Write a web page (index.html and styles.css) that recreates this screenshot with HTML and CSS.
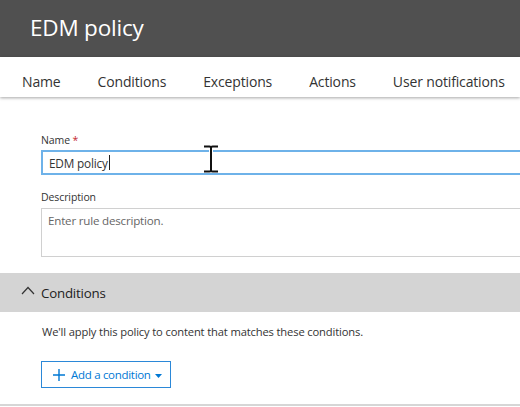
FILE: index.html
```html
<!DOCTYPE html>
<html>
<head>
<meta charset="utf-8">
<link rel="stylesheet" href="styles.css">
</head>
<body>
<div class="page">
  <header class="header"><h1 class="title">EDM policy</h1></header>
  <nav class="tabs">
    <span class="tab">Name</span>
    <span class="tab">Conditions</span>
    <span class="tab">Exceptions</span>
    <span class="tab">Actions</span>
    <span class="tab">User notifications</span>
  </nav>
  <section class="form">
    <label class="label">Name <span class="req">*</span></label>
    <div class="input"><span class="value">EDM policy</span><span class="caret"></span></div>
    <label class="label desc-label">Description</label>
    <div class="textarea">Enter rule description.</div>
  </section>
  <section class="band">
    <svg class="chev" width="14" height="9" viewBox="0 0 14 9"><path d="M1 8 L7 1.5 L13 8" fill="none" stroke="#333" stroke-width="1.2"/></svg>
    <span class="band-title">Conditions</span>
  </section>
  <section class="cond">
    <p class="cond-text">We'll apply this policy to content that matches these conditions.</p>
    <button class="add-btn">
      <svg class="plus" width="12" height="12" viewBox="0 0 12 12"><path d="M6 0 V12 M0 6 H12" stroke="#0078d4" stroke-width="1.4"/></svg>
      <span class="btn-label">Add a condition</span>
      <svg class="tri" width="7" height="4" viewBox="0 0 7 4"><path d="M0 0 H7 L3.5 4 Z" fill="#0078d4"/></svg>
    </button>
  </section>
  <div class="bottom-line"></div>
  <svg class="ibeam" width="18" height="28" viewBox="0 0 18 28">
    <path d="M2 1.5 H7.5 Q9 1.5 9 3 Q9 1.5 10.5 1.5 H16 M9 3 V25 M2 26.5 H7.5 Q9 26.5 9 25 Q9 26.5 10.5 26.5 H16" fill="none" stroke="#fff" stroke-width="4"/>
    <path d="M2 1.5 H7.5 Q9 1.5 9 3 Q9 1.5 10.5 1.5 H16 M9 3 V25 M2 26.5 H7.5 Q9 26.5 9 25 Q9 26.5 10.5 26.5 H16" fill="none" stroke="#111" stroke-width="2"/>
  </svg>
</div>
</body>
</html>
```
FILE: styles.css
```css
* { box-sizing: border-box; }
html, body { margin: 0; padding: 0; }
body {
  font-family: "Open Sans", "Noto Sans", sans-serif;
  background: #fff;
  color: #333;
  width: 520px;
  height: 407px;
  overflow: hidden;
}
.page { position: relative; width: 520px; height: 407px; overflow: hidden; }
.header {
  height: 57px;
  background: #505050;
  display: flex;
  align-items: center;
  padding-left: 30px;
}
.title {
  margin: 0;
  font-weight: 400;
  font-size: 22.5px;
  color: #fff;
  letter-spacing: -0.2px;
  padding-bottom: 2px;
}
.tabs {
  height: 40px;
  display: flex;
  align-items: center;
  gap: 37px;
  padding-left: 22px;
  padding-top: 9px;
  box-shadow: 0 1px 3px rgba(0,0,0,0.35);
  position: relative;
  white-space: nowrap;
}
.tab {
  font-size: 14px;
  color: #333;
  letter-spacing: -0.15px;
}
.form {
  padding: 36px 0 0 41px;
  display: flex;
  flex-direction: column;
}
.label {
  font-size: 10.5px;
  color: #333;
  line-height: 14px;
  letter-spacing: -0.1px;
}
.req { color: #c4262e; }
.input {
  margin-top: 3px;
  height: 25px;
  width: 500px;
  border: 2px solid #6eb2e9;
  border-right: none;
  display: flex;
  align-items: center;
  padding-left: 6px;
  font-size: 11.8px;
  color: #333;
}
.value { letter-spacing: -0.2px; }
.caret { width: 1px; height: 15px; background: #222; margin-left: 1px; }
.desc-label { margin-top: 15px; }
.textarea {
  margin-top: 4px;
  height: 49px;
  width: 500px;
  border: 1px solid #d0d0d0;
  border-right: none;
  padding: 4px 0 0 6px;
  font-size: 11.6px;
  color: #666;
  letter-spacing: -0.2px;
}
.band {
  margin-top: 16px;
  height: 39px;
  background: #d4d4d4;
  display: flex;
  align-items: center;
  padding-left: 21px;
}
.chev { margin-right: 6px; margin-top: -4px; }
.band-title { font-size: 13.3px; color: #222; letter-spacing: -0.2px; }
.cond { padding-left: 42px; display: flex; flex-direction: column; align-items: flex-start; }
.cond-text {
  margin: 13px 0 0 0;
  font-size: 11.2px;
  color: #333;
  letter-spacing: -0.15px;
  line-height: 14px;
}
.add-btn {
  margin-top: 22px;
  margin-left: -1px;
  height: 27px;
  border: 1px solid #2b88d8;
  background: #fff;
  display: inline-flex;
  align-items: center;
  padding: 0 8px 0 11px;
  font-family: inherit;
  font-size: 11.5px;
  color: #0078d4;
  letter-spacing: -0.3px;
  white-space: nowrap;
  cursor: pointer;
}
.plus { margin-right: 6px; flex: none; }
.tri { margin-left: 4px; margin-top: 2px; flex: none; }
.bottom-line {
  position: absolute;
  left: 0; right: 0; top: 404px;
  height: 2px;
  background: #d6d6d6;
}
.ibeam { position: absolute; left: 202px; top: 145px; }
```
